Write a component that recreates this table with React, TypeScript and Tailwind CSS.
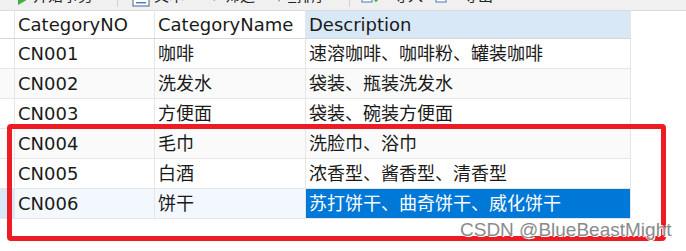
import React from 'react';

interface CategoryRow {
  no: string;
  name: string;
  description: string;
}

const rows: CategoryRow[] = [
  { no: 'CN001', name: '咖啡', description: '速溶咖啡、咖啡粉、罐装咖啡' },
  { no: 'CN002', name: '洗发水', description: '袋装、瓶装洗发水' },
  { no: 'CN003', name: '方便面', description: '袋装、碗装方便面' },
  { no: 'CN004', name: '毛巾', description: '洗脸巾、浴巾' },
  { no: 'CN005', name: '白酒', description: '浓香型、酱香型、清香型' },
  { no: 'CN006', name: '饼干', description: '苏打饼干、曲奇饼干、威化饼干' },
];

const SELECTED = 5;

const font = { fontFamily: '"DejaVu Sans", "Noto Sans CJK SC", sans-serif' };

const Separator = () => <div className="w-px self-stretch bg-[#cfcfcf]" />;

// only the lower edge of the toolbar is in view, the rest scrolled off
const Toolbar: React.FC = () => (
  <div className="h-[11px] overflow-hidden bg-[#f0f0f0] border-b border-[#dcdcdc]">
    <div
      className="flex items-end h-[24px] -mt-[17px] pl-[17px] text-[15px] leading-[24px] text-[#222]"
      style={{ fontFamily: '"Noto Sans CJK SC", sans-serif' }}
    >
      <div className="flex items-end gap-[2px] w-[100px]">
        <svg className="mb-[1px]" width="14" height="16" viewBox="0 0 14 16">
          <path d="M1 1 L13 8 L1 15 Z" fill="#3cb043" />
        </svg>
        <span>开始事务</span>
      </div>
      <Separator />
      <div className="flex items-end gap-[4px] ml-[14px] w-[76px]">
        <svg width="18" height="22" viewBox="0 0 18 22">
          <rect x="1" y="1" width="16" height="20" fill="#fff" stroke="#6a7b95" strokeWidth="1.2" />
          <rect x="4" y="17" width="10" height="1.4" fill="#3d7bd6" />
        </svg>
        <span>文本</span>
      </div>
      <div className="flex items-end gap-[9px] w-[64px]">
        <svg className="mb-[4px]" width="8" height="16" viewBox="0 0 8 16">
          <path d="M0 0 H7 V14 L0 10 Z" fill="#3d8ee0" />
        </svg>
        <span>筛选</span>
      </div>
      <div className="flex items-end gap-[2px] w-[77px]">
        <svg className="mb-[3px]" width="14" height="16" viewBox="0 0 14 16">
          <path d="M1 0 H13 L7 14 Z" fill="#3d8ee0" />
        </svg>
        <span>_排序</span>
      </div>
      <Separator />
      <div className="flex items-end gap-[10px] ml-[11px] w-[74px]">
        <svg className="mb-[4px]" width="22" height="16" viewBox="0 0 22 16">
          <rect x="1" y="2" width="10" height="13" fill="#fff" stroke="#4a78c2" strokeWidth="1" />
          <path d="M10 6 L15 13 L20 8" stroke="#3cb043" strokeWidth="3" fill="none" />
        </svg>
        <span>导入</span>
      </div>
      <div className="flex items-end gap-[6px]">
        <svg className="mb-[4px]" width="22" height="16" viewBox="0 0 22 16">
          <rect x="1" y="2" width="10" height="13" fill="#fff" stroke="#4a78c2" strokeWidth="1" />
          <path d="M9 10 Q14 13 20 6" stroke="#f39a1e" strokeWidth="4" fill="none" />
        </svg>
        <span>导出</span>
      </div>
    </div>
  </div>
);

const cell = 'h-full flex items-center pl-[3px] border-r border-[#e6e6e6] whitespace-nowrap overflow-hidden';
const cols = 'grid grid-cols-[15px_140px_151px_325px]';

export default function App() {
  return (
    <div className="relative w-[686px] h-[251px] bg-white overflow-hidden text-[#1a1a1a]" style={font}>
      <Toolbar />

      <div className="w-[631px] text-[18px]">
        <div className={`${cols} h-[28px] border-b border-[#d6d6d6]`}>
          <div className="border-r border-[#e6e6e6]" />
          <div className={cell}>CategoryNO</div>
          <div className={cell}>CategoryName</div>
          <div className={`${cell} bg-[#d9e8f7]`}>Description</div>
        </div>

        {rows.map((row, i) => {
          const selected = i === SELECTED;
          const stripe = i % 2 === 1 ? 'bg-[#fafafa]' : 'bg-white';
          return (
            <div
              key={row.no}
              className={`${cols} h-[30px] border-b border-[#e6e6e6] ${selected ? 'bg-[#f2f8fd]' : stripe}`}
            >
              <div className={`flex items-center justify-end pr-[2px] border-r border-[#e6e6e6] ${selected ? 'bg-[#d9e8f7]' : ''}`}>
                {selected && <div className="w-[3px] h-px bg-[#333]" />}
              </div>
              <div className={cell}>{row.no}</div>
              <div className={cell}>{row.name}</div>
              <div className={`${cell} ${selected ? 'bg-[#0078d7] text-white' : ''}`}>{row.description}</div>
            </div>
          );
        })}
      </div>

      {/* red frame drawn over the last three rows */}
      <div className="absolute left-[7px] top-[124px] w-[659px] h-[117px] border-[5px] border-[#ed1c24] rounded-[4px]" />

      <div
        className="absolute left-[460px] top-[219px] text-[19px] text-[#8a8a8a] leading-[22px] whitespace-nowrap [text-shadow:1px_1px_0_#fff,-1px_-1px_0_#fff]"
        style={{ fontFamily: '"Liberation Sans", Arial, sans-serif' }}
      >
        CSDN @BlueBeastMight
      </div>
    </div>
  );
}
